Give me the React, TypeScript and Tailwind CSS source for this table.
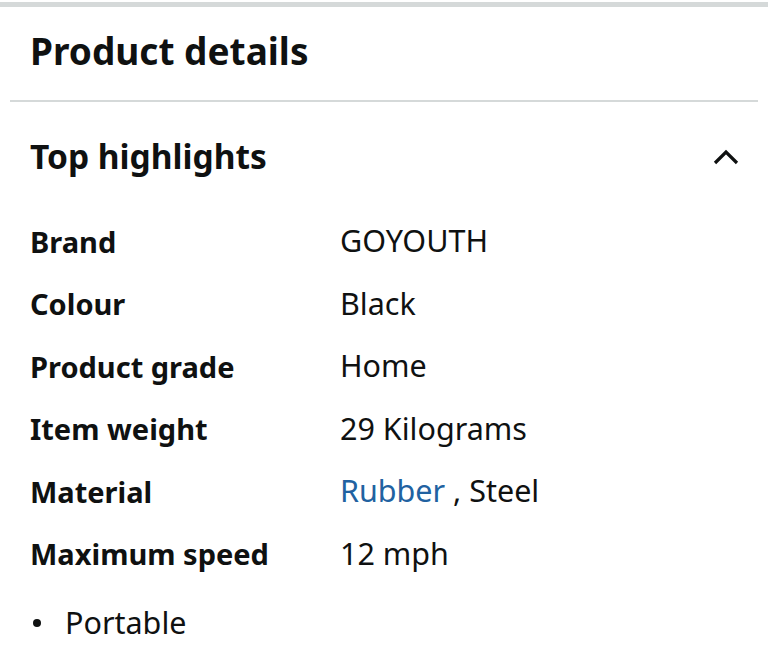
import React from 'react';

const rows: { label: string; value: React.ReactNode }[] = [
    { label: 'Brand', value: 'GOYOUTH' },
    { label: 'Colour', value: 'Black' },
    { label: 'Product grade', value: 'Home' },
    { label: 'Item weight', value: '29 Kilograms' },
    {
        label: 'Material',
        value: (
            <>
                <span className="text-[#2162a1]">Rubber</span> , Steel
            </>
        ),
    },
    { label: 'Maximum speed', value: '12 mph' },
];

const App: React.FC = () => {
    return (
        <div className="w-[768px] h-[659px] overflow-hidden bg-white text-[#0f1111] font-['Noto_Sans',sans-serif]">
            <div className="h-[7px] border-t-[2px] border-white bg-[#d5d9d9]" />
            <div className="px-[10px]">
                <div className="h-[95px] flex items-center pb-[6px] px-[20px] border-b-2 border-[#d5d9d9]">
                    <h2 className="text-[37px] font-bold leading-none">Product details</h2>
                </div>
            </div>
            <div className="px-[30px]">
                <div className="h-[110px] flex items-center justify-between">
                    <h3 className="text-[33.5px] font-bold leading-none">Top highlights</h3>
                    <svg width="28" height="18" viewBox="0 0 28 18" className="mr-[-2px]">
                        <path d="M3 15 L14 4 L25 15" fill="none" stroke="#0f1111" strokeWidth="3.2" />
                    </svg>
                </div>
                <div className="flex flex-col mt-[-2px]">
                    {rows.map((r) => (
                        <div key={r.label} className="flex h-[62.5px] items-center">
                            <div className="w-[310px] text-[29px] font-bold">{r.label}</div>
                            <div className="text-[30.5px]">{r.value}</div>
                        </div>
                    ))}
                </div>
                <ul className="mt-[8px] text-[30.5px]">
                    <li className="flex items-center h-[60px]">
                        <span className="ml-[3px] mr-[24px] w-[8px] h-[8px] rounded-full bg-[#0f1111]" />
                        Portable
                    </li>
                </ul>
            </div>
        </div>
    );
};

export default App;
